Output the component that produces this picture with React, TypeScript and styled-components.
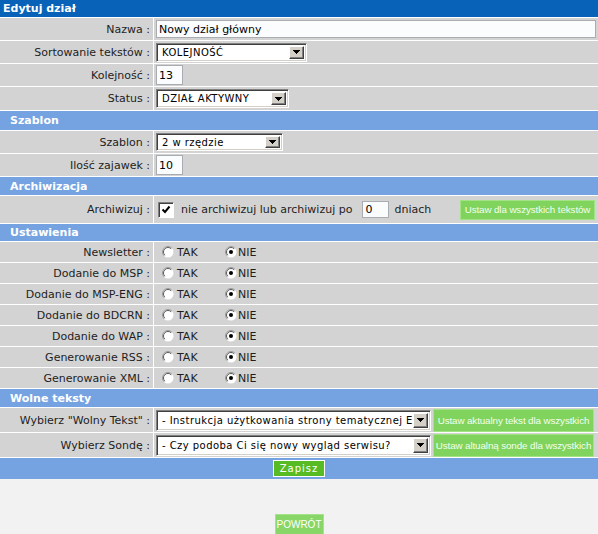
import styled, { createGlobalStyle } from "styled-components";

const GlobalStyle = createGlobalStyle`
  html, body {
    margin: 0;
    padding: 0;
    background: #f2f2f2;
  }
  body {
    font-family: "DejaVu Sans", Verdana, sans-serif;
    font-size: 11px;
    color: #1e1e1e;
  }
`;

const Page = styled.div`
  width: 598px;
  min-height: 534px;
  background: #f2f2f2;
`;

const Table = styled.div`
  display: flex;
  flex-direction: column;
  gap: 1px;
  background: #ffffff;
`;

const Title = styled.div`
  height: 17px;
  background: #0762b8;
  color: #ffffff;
  font-weight: bold;
  padding-left: 3px;
  display: flex;
  align-items: center;
`;

const Section = styled.div<{ $h: number }>`
  height: ${(p) => p.$h}px;
  background: #75a3e1;
  color: #ffffff;
  font-weight: bold;
  padding-left: 10px;
  display: flex;
  align-items: center;
`;

const Row = styled.div<{ $h: number }>`
  display: grid;
  grid-template-columns: 153px 1fr;
  column-gap: 1px;
  height: ${(p) => p.$h}px;
`;

const Label = styled.div`
  background: #d3d3d3;
  display: flex;
  align-items: center;
  justify-content: flex-end;
  padding-right: 3px;
  white-space: nowrap;
`;

const Value = styled.div`
  background: #d3d3d3;
  display: flex;
  align-items: center;
  padding-left: 2px;
  white-space: nowrap;
  min-width: 0;
`;

const TextInput = styled.input<{ $w: number; $h?: number; $ml?: number }>`
  width: ${(p) => p.$w}px;
  height: ${(p) => p.$h ?? 18}px;
  box-sizing: border-box;
  margin: 0 0 0 ${(p) => p.$ml ?? 0}px;
  padding: 0 2px;
  border: 1px solid #a9acb0;
  background: #fbfcfe;
  font-family: "DejaVu Sans", Verdana, sans-serif;
  font-size: 11px;
  color: #000;
  outline: none;
`;

const SelectBox = styled.div<{ $w: number; $h: number }>`
  width: ${(p) => p.$w}px;
  height: ${(p) => p.$h}px;
  box-sizing: border-box;
  display: flex;
  align-items: stretch;
  background: #ffffff;
  border: 1px solid;
  border-color: #808080 #ffffff #ffffff #808080;
  box-shadow: inset 1px 1px 0 #404040, inset -1px -1px 0 #d4d0c8;
  padding: 2px;
`;

const SelectText = styled.span`
  flex: 1;
  overflow: hidden;
  white-space: nowrap;
  font-size: 10px;
  letter-spacing: 0.45px;
  padding-left: 3px;
  color: #000;
  display: flex;
  align-items: center;
`;

const ArrowBtn = styled.span`
  width: 15px;
  box-sizing: border-box;
  background: #d4d0c8;
  border: 1px solid;
  border-color: #ffffff #404040 #404040 #ffffff;
  box-shadow: inset -1px -1px 0 #808080;
  display: flex;
  align-items: center;
  justify-content: center;
`;

const CheckBox = styled.span`
  width: 16px;
  height: 16px;
  box-sizing: border-box;
  margin-left: 2px;
  background: #ffffff;
  border: 1px solid;
  border-color: #808080 #ffffff #ffffff #808080;
  box-shadow: inset 1px 1px 0 #404040;
  display: flex;
  align-items: center;
  justify-content: center;
`;

const Text = styled.span<{ $ml?: number }>`
  margin-left: ${(p) => p.$ml ?? 0}px;
`;

const GreenButton = styled.button<{ $w: number; $h: number; $ml?: number; $mr?: number }>`
  width: ${(p) => p.$w}px;
  height: ${(p) => p.$h}px;
  margin: 0 ${(p) => p.$mr ?? 0}px 0 ${(p) => p.$ml ?? 0}px;
  padding: 0;
  background: #80d35d;
  border: 1px solid #a3e287;
  color: #f3fff0;
  font-family: "Liberation Sans", Arial, sans-serif;
  font-size: 9.8px;
  letter-spacing: -0.1px;
  white-space: nowrap;
  overflow: hidden;
`;

const PushRight = styled(GreenButton)`
  margin-left: auto;
`;

const RadioOption = styled.span<{ $w?: number; $gap: number }>`
  display: inline-flex;
  align-items: center;
  gap: ${(p) => p.$gap}px;
  width: ${(p) => (p.$w ? `${p.$w}px` : "auto")};
`;

const RadioGroup = styled.div`
  display: flex;
  align-items: center;
  padding-left: 6px;
`;

const Footer = styled.div`
  height: 21px;
  background: #75a3e1;
  display: flex;
  align-items: center;
  justify-content: center;
`;

const SaveButton = styled.button`
  width: 52px;
  height: 17px;
  margin: 0;
  padding: 0;
  background: #57bb24;
  border: 1px solid #ffffff;
  color: #ffffff;
  font-family: "DejaVu Sans", Verdana, sans-serif;
  font-size: 10px;
  letter-spacing: 1px;
`;

const BackArea = styled.div`
  display: flex;
  justify-content: center;
  padding-top: 35px;
`;

const BackButton = styled.button`
  width: 49px;
  height: 21px;
  margin: 0;
  padding: 0;
  background: #88d667;
  border: 1px solid #a4e38a;
  color: #ffffff;
  font-family: "Liberation Sans", Arial, sans-serif;
  font-size: 10px;
`;

const Arrow = () => (
  <svg width="7" height="4" viewBox="0 0 7 4" shapeRendering="crispEdges">
    <rect x="0" y="0" width="7" height="1" fill="#000" />
    <rect x="1" y="1" width="5" height="1" fill="#000" />
    <rect x="2" y="2" width="3" height="1" fill="#000" />
    <rect x="3" y="3" width="1" height="1" fill="#000" />
  </svg>
);

const Select = ({ w, h, text }: { w: number; h: number; text: string }) => (
  <SelectBox $w={w} $h={h}>
    <SelectText>{text}</SelectText>
    <ArrowBtn>
      <Arrow />
    </ArrowBtn>
  </SelectBox>
);

const Radio = ({ checked }: { checked?: boolean }) => (
  <svg width="12" height="12" viewBox="0 0 12 12">
    <circle cx="6" cy="6" r="5.5" fill="#fff" />
    <path d="M9.9 2.1 A5.5 5.5 0 0 0 2.1 9.9" stroke="#9a9a9a" strokeWidth="1" fill="none" />
    <path d="M9.2 2.8 A4.5 4.5 0 0 0 2.8 9.2" stroke="#5a5a5a" strokeWidth="1" fill="none" />
    {checked && <circle cx="6" cy="6" r="2" fill="#000" />}
  </svg>
);

const settings = [
  "Newsletter",
  "Dodanie do MSP",
  "Dodanie do MSP-ENG",
  "Dodanie do BDCRN",
  "Dodanie do WAP",
  "Generowanie RSS",
  "Generowanie XML",
];

export default function App() {
  return (
    <Page>
      <GlobalStyle />
      <Table>
        <Title>Edytuj dział</Title>

        <Row $h={22}>
          <Label>Nazwa :</Label>
          <Value>
            <TextInput $w={440} value="Nowy dział główny" readOnly />
          </Value>
        </Row>
        <Row $h={22}>
          <Label>Sortowanie tekstów :</Label>
          <Value>
            <Select w={151} h={19} text="KOLEJNOŚĆ" />
          </Value>
        </Row>
        <Row $h={22}>
          <Label>Kolejność :</Label>
          <Value>
            <TextInput $w={27} $h={20} value="13" readOnly />
          </Value>
        </Row>
        <Row $h={23}>
          <Label>Status :</Label>
          <Value>
            <Select w={133} h={19} text="DZIAŁ AKTYWNY" />
          </Value>
        </Row>

        <Section $h={19}>Szablon</Section>
        <Row $h={22}>
          <Label>Szablon :</Label>
          <Value>
            <Select w={127} h={18} text="2 w rzędzie" />
          </Value>
        </Row>
        <Row $h={22}>
          <Label>Ilość zajawek :</Label>
          <Value>
            <TextInput $w={27} $h={20} value="10" readOnly />
          </Value>
        </Row>

        <Section $h={18}>Archiwizacja</Section>
        <Row $h={27}>
          <Label>Archiwizuj :</Label>
          <Value>
            <CheckBox>
              <svg width="10" height="10" viewBox="0 0 10 10">
                <polyline points="1.5,4.5 4,7 8.5,1.5" fill="none" stroke="#000" strokeWidth="2" />
              </svg>
            </CheckBox>
            <Text $ml={7}>nie archiwizuj lub archiwizuj po</Text>
            <TextInput $w={27} $h={17} $ml={10} value="0" readOnly />
            <Text $ml={5}>dniach</Text>
            <PushRight $w={135} $h={20} $mr={3}>
              Ustaw dla wszystkich tekstów
            </PushRight>
          </Value>
        </Row>

        <Section $h={17}>Ustawienia</Section>
        {settings.map((name) => (
          <Row $h={20} key={name}>
            <Label>{name} :</Label>
            <Value>
              <RadioGroup>
                <RadioOption $w={63} $gap={3}>
                  <Radio />
                  TAK
                </RadioOption>
                <RadioOption $gap={1}>
                  <Radio checked />
                  NIE
                </RadioOption>
              </RadioGroup>
            </Value>
          </Row>
        ))}

        <Section $h={18}>Wolne teksty</Section>
        <Row $h={24}>
          <Label>Wybierz "Wolny Tekst" :</Label>
          <Value>
            <Select w={275} h={21} text="- Instrukcja użytkowania strony tematycznej E" />
            <GreenButton $w={161} $h={23} $ml={2}>
              Ustaw aktualny tekst dla wszystkich
            </GreenButton>
          </Value>
        </Row>
        <Row $h={24}>
          <Label>Wybierz Sondę :</Label>
          <Value>
            <Select w={275} h={21} text="- Czy podoba Ci się nowy wygląd serwisu?" />
            <GreenButton $w={161} $h={23} $ml={2}>
              Ustaw altualną sonde dla wszystkich
            </GreenButton>
          </Value>
        </Row>

        <Footer>
          <SaveButton>Zapisz</SaveButton>
        </Footer>
      </Table>

      <BackArea>
        <BackButton>POWRÓT</BackButton>
      </BackArea>
    </Page>
  );
}
